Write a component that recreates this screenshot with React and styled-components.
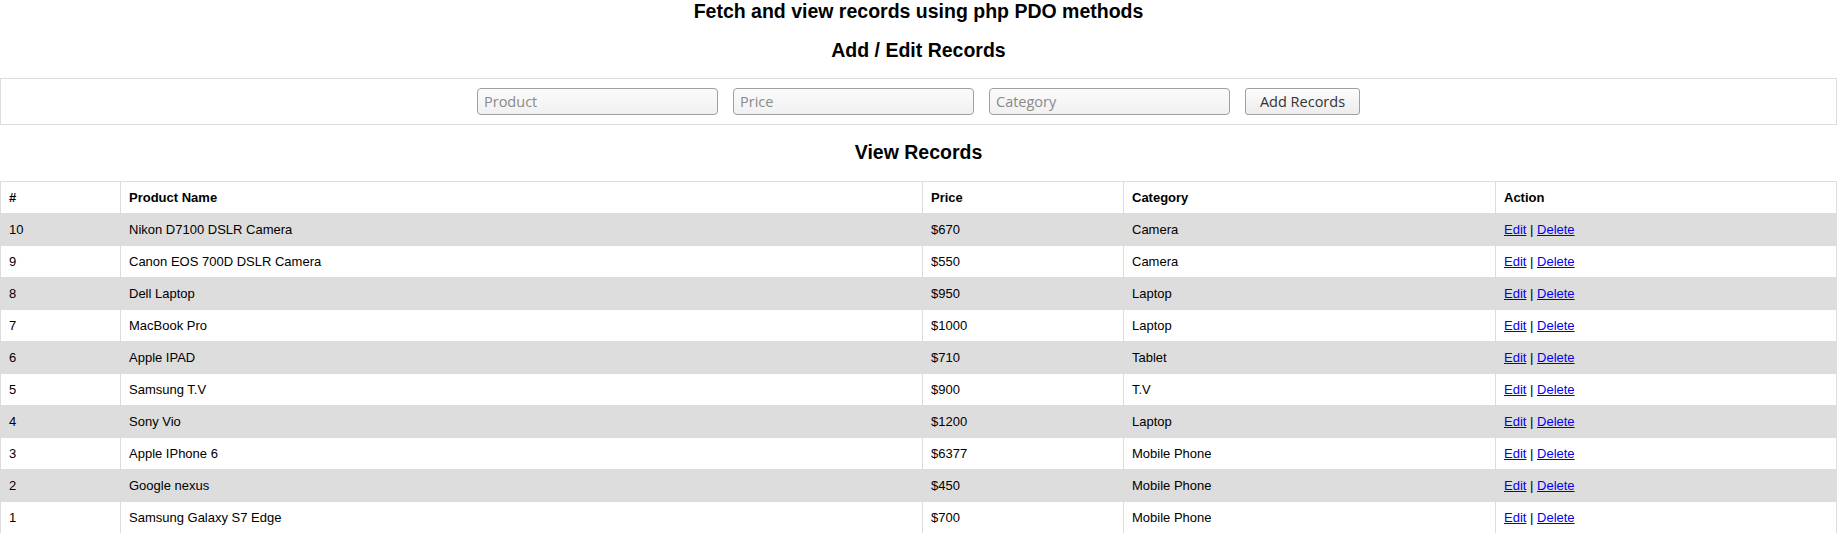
import React from "react";
import styled, { createGlobalStyle } from "styled-components";

const GlobalStyle = createGlobalStyle`
  html, body { margin: 0; padding: 0; background: #fff; }
  body { font-family: "Liberation Sans", Arial, sans-serif; color: #000; }
`;

const Page = styled.div`
  display: flex;
  flex-direction: column;
`;

const Heading = styled.h3`
  margin: ${(p) => p.$mt || 0}px 0 ${(p) => p.$mb || 0}px;
  font-size: 19.5px;
  line-height: 23px;
  font-weight: bold;
  text-align: center;
  color: #000;
`;

const FormBox = styled.form`
  display: flex;
  justify-content: center;
  align-items: center;
  gap: 15px;
  border: 1px solid #ddd;
  padding: 9px 0 9px;
`;

const Field = styled.input`
  box-sizing: border-box;
  width: 241px;
  height: 27px;
  margin: 0;
  padding: 2px 6px;
  border: 1px solid #a0a0a0;
  border-radius: 4px;
  background: linear-gradient(#fbfbfb, #f1f1f1);
  font-family: "Open Sans", "Noto Sans", sans-serif;
  font-size: 14.5px;
  color: #333;
  outline: none;
  &::placeholder { color: #8a8a8a; }
`;

const Button = styled.button`
  box-sizing: border-box;
  width: 115px;
  height: 27px;
  margin: 0;
  padding: 0 8px;
  border: 1px solid #a0a0a0;
  border-radius: 3px;
  background: linear-gradient(#fdfdfd, #ececec);
  font-family: "Open Sans", "Noto Sans", sans-serif;
  font-size: 14.5px;
  color: #333;
`;

const Table = styled.table`
  width: 100%;
  border-collapse: collapse;
  border: 1px solid #ddd;
  font-size: 13px;
`;

const Row = styled.tr`
  background: ${(p) => (p.$striped ? "#dddddd" : "#fff")};
`;

const Th = styled.th`
  border: 1px solid #ddd;
  padding: 8px;
  line-height: 15px;
  text-align: left;
  font-weight: bold;
`;

const Td = styled.td`
  border: 1px solid #ddd;
  padding: 8px;
  line-height: 15px;
  text-align: left;
`;

const Link = styled.a`
  color: #0000ee;
  text-decoration: underline;
`;

const records = [
  [10, "Nikon D7100 DSLR Camera", "$670", "Camera"],
  [9, "Canon EOS 700D DSLR Camera", "$550", "Camera"],
  [8, "Dell Laptop", "$950", "Laptop"],
  [7, "MacBook Pro", "$1000", "Laptop"],
  [6, "Apple IPAD", "$710", "Tablet"],
  [5, "Samsung T.V", "$900", "T.V"],
  [4, "Sony Vio", "$1200", "Laptop"],
  [3, "Apple IPhone 6", "$6377", "Mobile Phone"],
  [2, "Google nexus", "$450", "Mobile Phone"],
  [1, "Samsung Galaxy S7 Edge", "$700", "Mobile Phone"],
];

export default function App() {
  return (
    <Page>
      <GlobalStyle />
      <Heading>Fetch and view records using php PDO methods</Heading>
      <Heading $mt={16} $mb={16}>Add / Edit Records</Heading>
      <FormBox onSubmit={(e) => e.preventDefault()}>
        <Field placeholder="Product" />
        <Field placeholder="Price" />
        <Field placeholder="Category" />
        <Button type="submit">Add Records</Button>
      </FormBox>
      <Heading $mt={16} $mb={17}>View Records</Heading>
      <Table>
        <colgroup>
          <col style={{ width: 120 }} />
          <col style={{ width: 802 }} />
          <col style={{ width: 201 }} />
          <col style={{ width: 372 }} />
          <col />
        </colgroup>
        <thead>
          <Row>
            <Th>#</Th>
            <Th>Product Name</Th>
            <Th>Price</Th>
            <Th>Category</Th>
            <Th>Action</Th>
          </Row>
        </thead>
        <tbody>
          {records.map((r, i) => (
            <Row key={r[0]} $striped={i % 2 === 0}>
              <Td>{r[0]}</Td>
              <Td>{r[1]}</Td>
              <Td>{r[2]}</Td>
              <Td>{r[3]}</Td>
              <Td>
                <Link href="#">Edit</Link> | <Link href="#">Delete</Link>
              </Td>
            </Row>
          ))}
        </tbody>
      </Table>
    </Page>
  );
}
